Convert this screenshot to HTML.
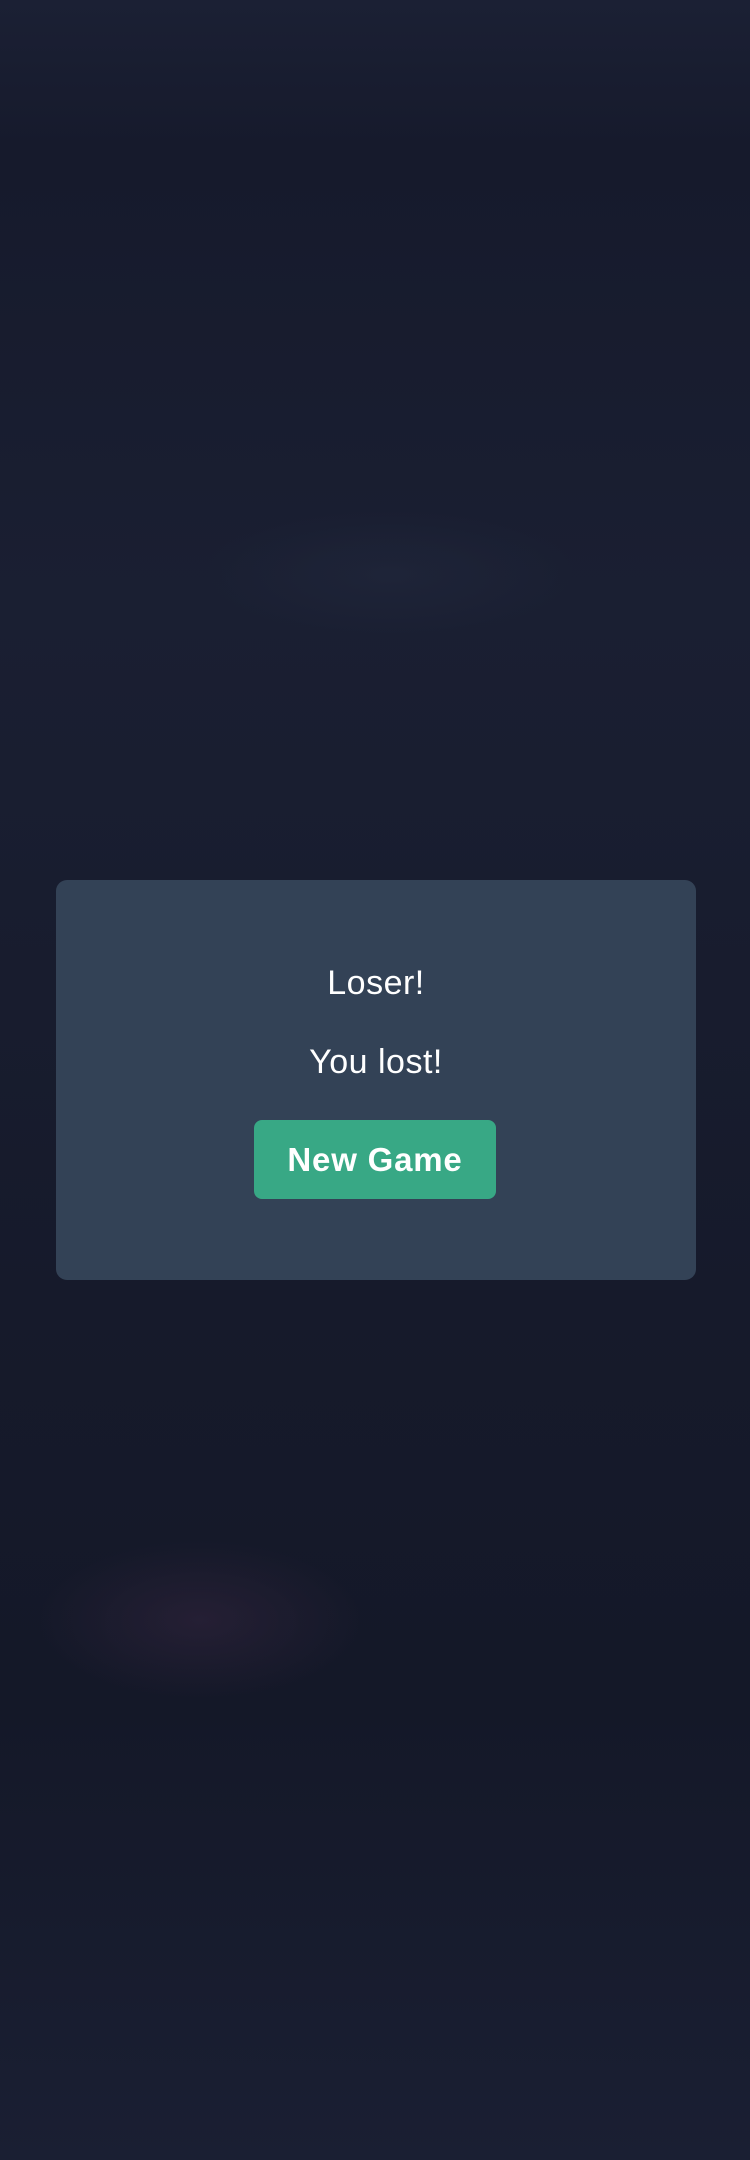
<!DOCTYPE html>
<html><head><style>
html,body{margin:0;padding:0}
body{width:750px;height:2160px;position:relative;overflow:hidden;background:linear-gradient(#1b2034 0px,#161a2c 150px,#1a1f32 600px,#161a2b 1300px,#141828 1700px,#1a1f33 2160px);font-family:"Liberation Sans",sans-serif}
.blob{position:absolute;border-radius:50%}
.modal{position:absolute;left:56px;top:880px;width:640px;height:400px;background:#334256;border-radius:11px}
.t{position:absolute;left:0;width:100%;text-align:center;color:#fff;font-size:34px;letter-spacing:0.5px}
.btn{position:absolute;left:198px;top:240px;width:242px;height:79px;background:#38a885;border-radius:8px;color:#fff;font-weight:bold;font-size:33px;text-align:center;line-height:79px;letter-spacing:0.8px}
</style></head><body>
<div class="blob" style="left:200px;top:510px;width:380px;height:130px;background:radial-gradient(closest-side,#1e2438,rgba(30,36,56,0))"></div>
<div class="blob" style="left:40px;top:1540px;width:320px;height:160px;background:radial-gradient(closest-side,#251f34,rgba(37,31,52,0))"></div>
<div class="modal">
<div class="t" style="top:84px">Loser!</div>
<div class="t" style="top:163px">You lost!</div>
<div class="btn">New Game</div>
</div>
</body></html>
